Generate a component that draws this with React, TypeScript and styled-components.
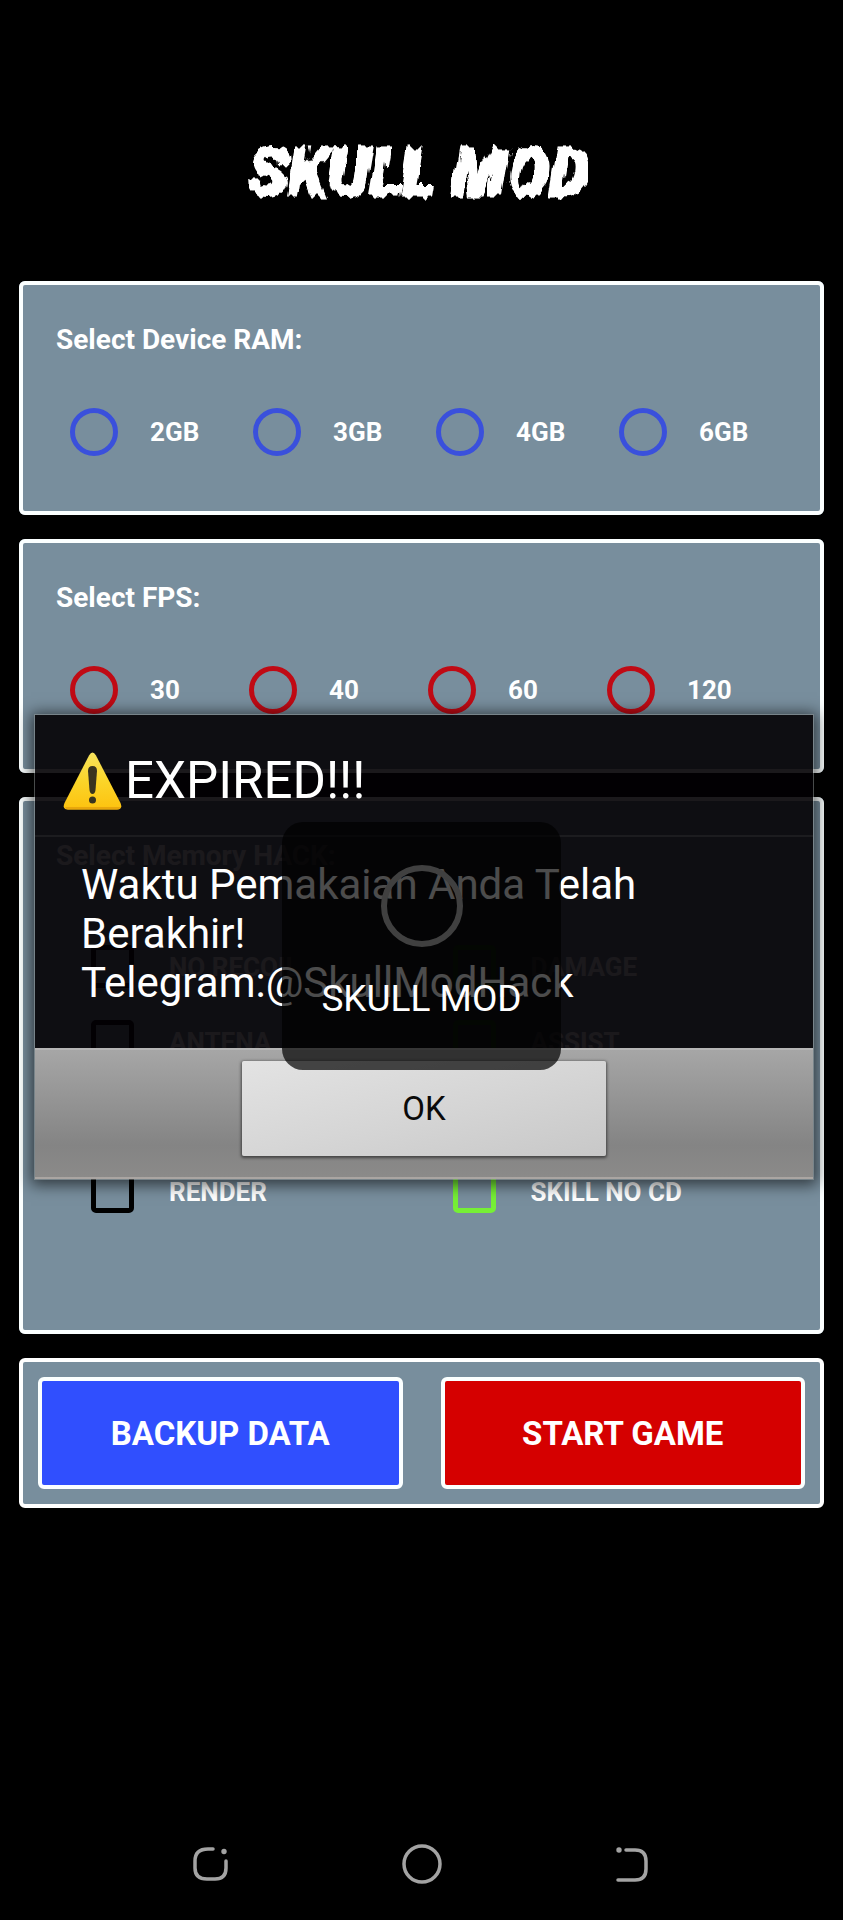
import React from "react";
import styled, { createGlobalStyle } from "styled-components";

const slate = "#788e9d";

const GlobalStyle = createGlobalStyle`
  * { box-sizing: border-box; }
  body {
    margin: 0;
    background: #000;
    color: #fff;
    font-family: Roboto, "Liberation Sans", sans-serif;
  }
`;

const Page = styled.div`
  position: relative;
  display: flex;
  flex-direction: column;
  min-height: 100vh;
`;

const Header = styled.header`
  display: flex;
  align-items: center;
  justify-content: center;
  padding: 132px 24px 65px 19px;
`;

const Logo = styled.h1`
  margin: 0;
  font-size: 64px;
  line-height: 84px;
  font-weight: 900;
  font-style: italic;
  -webkit-text-stroke: 3px #fff;
  filter: url(#brush);
`;

const Main = styled.main`
  display: flex;
  flex-direction: column;
  gap: 24px;
  padding: 0 19px;
`;

const Panel = styled.fieldset<{ $height: number }>`
  min-width: 0;
  min-height: ${(p) => p.$height}px;
  margin: 0;
  padding: 39px 0 0 33px;
  background: ${slate};
  border: 4px solid #fbffff;
  border-radius: 6px;
`;

const PanelTitle = styled.legend`
  float: left;
  width: 100%;
  padding: 0;
  font-size: 28px;
  line-height: 32px;
  font-weight: 700;
`;

const RadioRow = styled.div`
  clear: both;
  display: flex;
  padding: 52px 0 0 14px;
`;

const Option = styled.label<{ $width: number }>`
  display: flex;
  align-items: center;
  gap: 32px;
  flex: 0 1 ${(p) => p.$width}px;
  font-size: 26px;
  line-height: 32px;
  font-weight: 700;
`;

const Radio = styled.input<{ $color: string }>`
  appearance: none;
  flex: none;
  width: 48px;
  height: 48px;
  margin: 0;
  border: 5px solid ${(p) => p.$color};
  border-radius: 50%;
`;

const CheckGrid = styled.div`
  clear: both;
  display: grid;
  grid-template-columns: 1fr 1fr;
  grid-auto-rows: 75px;
  padding: 57px 6px 0 35px;
`;

const CheckOption = styled.label<{ $row: number }>`
  display: flex;
  align-items: center;
  gap: 35px;
  grid-row: ${(p) => p.$row};
  font-size: 26px;
  line-height: 32px;
  font-weight: 700;
`;

const Check = styled.input<{ $color: string }>`
  appearance: none;
  flex: none;
  width: 43px;
  height: 43px;
  margin: 0;
  border: 5px solid ${(p) => p.$color};
  border-radius: 5px;
`;

const Actions = styled.section`
  display: flex;
  gap: 38px;
  padding: 15px;
  background: ${slate};
  border: 4px solid #fff;
  border-radius: 6px;
`;

const ActionButton = styled.button<{ $color: string }>`
  flex: 1;
  height: 112px;
  padding: 2px 0 0;
  border: 4px solid #fbffff;
  border-radius: 6px;
  background: ${(p) => p.$color};
  color: #fff;
  font: 700 33px/40px Roboto, "Liberation Sans", sans-serif;
`;

const SystemNav = styled.nav`
  display: grid;
  grid-template-columns: repeat(3, 1fr);
  justify-items: center;
  align-items: center;
  height: 112px;
  margin-top: auto;
  padding: 0 12.5%;
`;

const NavButton = styled.button`
  width: 48px;
  height: 48px;
  padding: 0;
  border: 0;
  background: none;
  color: #a3a3a3;

  svg { display: block; }
`;

const Overlay = styled.div`
  position: absolute;
  inset: 0;
  display: flex;
  align-items: center;
  justify-content: center;
  padding: 0 29px 27px 34px;
`;

const Dialog = styled.div`
  display: flex;
  flex-direction: column;
  flex: 1;
  border: 1px solid rgba(120, 125, 125, 0.6);
  box-shadow: 0 2px 14px 3px rgba(0, 0, 0, 0.6);
`;

const DialogHead = styled.div`
  display: flex;
  align-items: center;
  height: 122px;
  padding: 12px 28px 0;
  background: rgba(2, 0, 3, 0.9);
  border-bottom: 2px solid #1c1c1f;
`;

const DialogTitle = styled.h2`
  margin: 0 0 0 2px;
  font-size: 51px;
  line-height: 60px;
  font-weight: 400;
`;

const DialogText = styled.p`
  margin: 0;
  padding: 23px 46px 41px;
  background: rgba(2, 0, 3, 0.9);
  font-size: 42px;
  line-height: 49px;
`;

const DialogBar = styled.div`
  display: flex;
  justify-content: center;
  padding: 11px;
  height: 131px;
  border-top: 2px solid #b6b6b6;
  border-bottom: 2px solid #aaa5a2;
  background: linear-gradient(#a6a6a6, #848484 75%, #8b8a89);
`;

const OkButton = styled.button`
  width: 364px;
  height: 95px;
  padding: 2px 0 0;
  border: 0;
  border-radius: 2px;
  background: linear-gradient(165deg, #e3e3e3, #d6d6d6 50%, #c8c8c8);
  box-shadow: 0 1px 3px 1px rgba(0, 0, 0, 0.5);
  color: #0a0a0a;
  font: 400 33px/40px Roboto, "Liberation Sans", sans-serif;
`;

const ToastLayer = styled(Overlay)`
  padding: 0 0 28px;
  pointer-events: none;
`;

const Toast = styled.div`
  display: flex;
  flex-direction: column;
  align-items: center;
  width: 279px;
  height: 248px;
  padding-top: 43px;
  border-radius: 21px;
  background: rgba(0, 0, 0, 0.7);
`;

const Ring = styled.div`
  width: 82px;
  height: 82px;
  border: 6px solid #404040;
  border-radius: 50%;
`;

const ToastText = styled.span`
  margin-top: 31px;
  font-size: 37px;
  line-height: 42px;
`;

function WarningIcon() {
  return (
    <svg width="60" height="60" viewBox="0 0 60 60" aria-hidden="true">
      <defs>
        <linearGradient id="warn" x1="0" y1="0" x2="0" y2="1">
          <stop offset="0" stopColor="#f6e35e" />
          <stop offset="0.5" stopColor="#fbd529" />
          <stop offset="1" stopColor="#fdc20f" />
        </linearGradient>
      </defs>
      <path
        d="M26 4.500Q29.500 -1.500 33 4.500L57.500 52Q60 58 54.500 58.500H4.500Q-1 58 1.500 52Z"
        fill="url(#warn)"
      />
      <path d="M2 56Q3 58.500 5 58.500H54Q57 58.500 58 56Z" fill="#e9a70c" />
      <path d="M25 20Q25 15 29.500 15T34 20L32.500 39Q32 43 29.500 43T26.500 39Z" fill="#38331f" />
      <circle cx="29.500" cy="49" r="3.500" fill="#38331f" />
    </svg>
  );
}

const ram = ["2GB", "3GB", "4GB", "6GB"];
const fps = ["30", "40", "60", "120"];
const hacks = [
  { name: "NO RECOIL", row: 1, color: "#000" },
  { name: "DAMAGE", row: 1, color: "#76ef36" },
  { name: "ANTENA", row: 2, color: "#000" },
  { name: "ASSIST", row: 2, color: "#76ef36" },
  { name: "RENDER", row: 4, color: "#000" },
  { name: "SKILL NO CD", row: 4, color: "#76ef36" },
];

export default function App() {
  return (
    <Page>
      <GlobalStyle />
      <Header>
        <svg width="0" height="0" aria-hidden="true" style={{ position: "absolute" }}>
          <filter id="brush" x="-5%" y="-10%" width="110%" height="120%">
            <feTurbulence type="fractalNoise" baseFrequency="0.12 0.02" numOctaves="2" seed="7" />
            <feDisplacementMap in="SourceGraphic" scale="14" xChannelSelector="A" yChannelSelector="G" />
          </filter>
        </svg>
        <Logo>SKULL MOD</Logo>
      </Header>

      <Main>
        <Panel $height={234}>
          <PanelTitle>Select Device RAM:</PanelTitle>
          <RadioRow>
            {ram.map((v) => (
              <Option key={v} $width={183}>
                <Radio type="radio" name="ram" value={v} $color="#3a50dc" />
                {v}
              </Option>
            ))}
          </RadioRow>
        </Panel>

        <Panel $height={234}>
          <PanelTitle>Select FPS:</PanelTitle>
          <RadioRow>
            {fps.map((v) => (
              <Option key={v} $width={179}>
                <Radio type="radio" name="fps" value={v} $color="#c00a14" />
                {v}
              </Option>
            ))}
          </RadioRow>
        </Panel>

        <Panel $height={537}>
          <PanelTitle>Select Memory HACK:</PanelTitle>
          <CheckGrid>
            {hacks.map((h) => (
              <CheckOption key={h.name} $row={h.row}>
                <Check type="checkbox" $color={h.color} />
                {h.name}
              </CheckOption>
            ))}
          </CheckGrid>
        </Panel>

        <Actions>
          <ActionButton type="button" $color="#304ffe">BACKUP DATA</ActionButton>
          <ActionButton type="button" $color="#d50000">START GAME</ActionButton>
        </Actions>
      </Main>

      <SystemNav>
        <NavButton type="button" aria-label="Recent apps">
          <svg width="48" height="48" viewBox="0 0 48 48" fill="none" stroke="currentColor" strokeWidth="3.500" strokeLinecap="round">
            <path d="M26 9H21Q8 9 8 21V28Q8 39 20 39H28Q39 39 39 28V21" />
            <circle cx="37" cy="11.500" r="2.700" fill="currentColor" stroke="none" />
          </svg>
        </NavButton>
        <NavButton type="button" aria-label="Home">
          <svg width="48" height="48" viewBox="0 0 48 48" fill="none" stroke="currentColor" strokeWidth="3.500">
            <circle cx="24" cy="24" r="18" />
          </svg>
        </NavButton>
        <NavButton type="button" aria-label="Back">
          <svg width="48" height="48" viewBox="0 0 48 48" fill="none" stroke="currentColor" strokeWidth="3.500" strokeLinecap="round">
            <path d="M18 10H27Q38 10 38 21V29Q38 40 27 40H10" />
            <circle cx="11" cy="10" r="2.700" fill="currentColor" stroke="none" />
          </svg>
        </NavButton>
      </SystemNav>

      <Overlay>
        <Dialog role="alertdialog" aria-labelledby="dialog-title">
          <DialogHead>
            <WarningIcon />
            <DialogTitle id="dialog-title">EXPIRED!!!</DialogTitle>
          </DialogHead>
          <DialogText>
            Waktu Pemakaian Anda Telah Berakhir!
            <br />
            Telegram:@SkullModHack
          </DialogText>
          <DialogBar>
            <OkButton type="button">OK</OkButton>
          </DialogBar>
        </Dialog>
      </Overlay>

      <ToastLayer>
        <Toast role="status">
          <Ring />
          <ToastText>SKULL MOD</ToastText>
        </Toast>
      </ToastLayer>
    </Page>
  );
}
